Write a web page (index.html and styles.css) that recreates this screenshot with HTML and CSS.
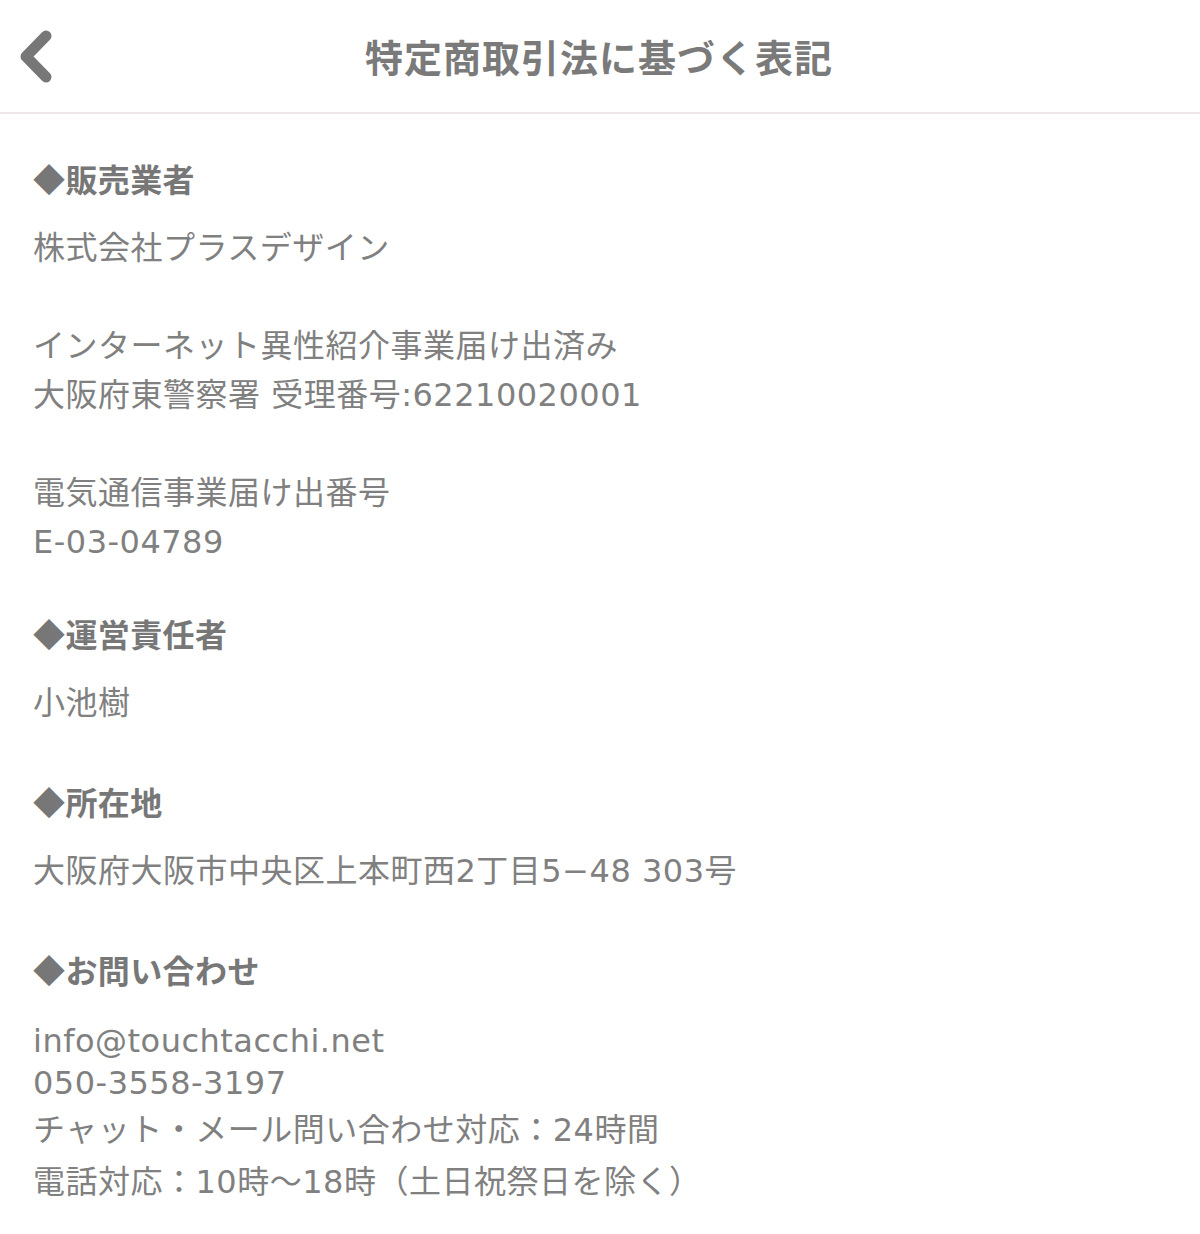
FILE: index.html
```html
<!DOCTYPE html>
<html lang="ja">
<head>
<meta charset="utf-8">
<title>特定商取引法に基づく表記</title>
<link rel="stylesheet" href="styles.css">
</head>
<body>
<header class="bar">
  <a class="back" href="#" aria-label="戻る">
    <svg width="60" height="112" viewBox="0 0 60 112"><path d="M46 36 L26 56.5 L46 77" fill="none" stroke="#777" stroke-width="11" stroke-linecap="round" stroke-linejoin="round"/></svg>
  </a>
  <h1 class="title">特定商取引法に基づく表記</h1>
</header>
<main class="content">
  <section class="sec sec-first">
    <h2 class="head">◆販売業者</h2>
    <p class="body">株式会社プラスデザイン<br><br>インターネット異性紹介事業届け出済み<br>大阪府東警察署 受理番号:62210020001<br><br>電気通信事業届け出番号<br>E-03-04789</p>
  </section>
  <section class="sec">
    <h2 class="head">◆運営責任者</h2>
    <p class="body">小池樹</p>
  </section>
  <section class="sec">
    <h2 class="head">◆所在地</h2>
    <p class="body">大阪府大阪市中央区上本町西2丁目5−48 303号</p>
  </section>
  <section class="sec sec-last">
    <h2 class="head">◆お問い合わせ</h2>
    <div class="contact">
      <div class="c-line short first">info@touchtacchi.net</div>
      <div class="c-line short">050-3558-3197</div>
      <div class="c-line">チャット・メール問い合わせ対応：24時間</div>
      <div class="c-line">電話対応：10時〜18時（土日祝祭日を除く）</div>
    </div>
  </section>
</main>
</body>
</html>
```

FILE: styles.css
```css
html, body {
  margin: 0;
  padding: 0;
  background: #fff;
}
body {
  font-family: "Noto Sans CJK JP", "Noto Sans", sans-serif;
  color: #808080;
}
.bar {
  position: relative;
  height: 112px;
  border-bottom: 2px solid #efe7e7;
  display: flex;
  align-items: center;
  justify-content: center;
}
.back {
  position: absolute;
  left: 0;
  top: 0;
  display: block;
  width: 60px;
  height: 112px;
}
.back svg { display: block; }
.title {
  margin: 0;
  font-size: 38px;
  font-weight: 700;
  color: #7a7a7a;
  line-height: 112px;
  letter-spacing: 1px;
  transform: translateX(-1px);
}
.content {
  padding: 39px 33px 20px;
}
.sec {
  margin-bottom: 48px;
}
.sec-first {
  margin-bottom: 41px;
}
.sec-last {
  margin-bottom: 0;
}
.head {
  margin: 0 0 17px;
  font-size: 32px;
  font-weight: 700;
  line-height: 50px;
  color: #777;
  letter-spacing: 0.4px;
}
.body, .contact {
  font-family: "DejaVu Sans", "Noto Sans CJK JP", sans-serif;
  font-size: 32px;
  letter-spacing: 0.5px;
}
.body {
  margin: 0;
  padding-top: 4px;
  line-height: 49px;
}
.c-line { line-height: 52px; }
.c-line.short { line-height: 42px; }
.c-line.first { margin-top: 26px; }
```
